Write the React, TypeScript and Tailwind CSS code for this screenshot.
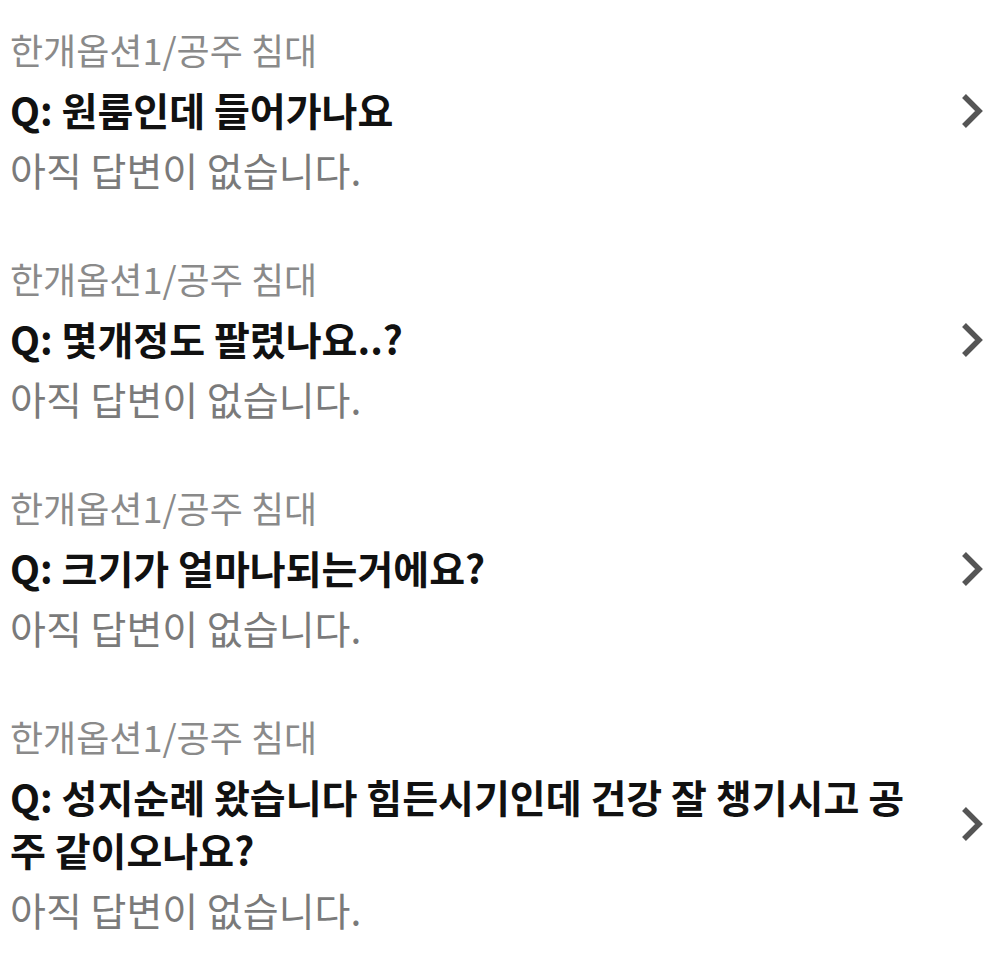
import React from "react";

const items = [
  { q: "원룸인데 들어가나요" },
  { q: "몇개정도 팔렸나요..?" },
  { q: "크기가 얼마나되는거에요?" },
  { q: "성지순례 왔습니다 힘든시기인데 건강 잘 챙기시고 공주 같이오나요?" },
];

function Chevron() {
  return (
    <svg width="30" height="40" viewBox="0 0 30 40" fill="none">
      <path d="M6 5 L21 20 L6 35" stroke="#555555" strokeWidth="5.5" strokeLinecap="butt" strokeLinejoin="miter" />
    </svg>
  );
}

export default function App() {
  return (
    <div
      className="w-[999px] h-[968px] bg-white pt-[25px]"
      style={{ fontFamily: '"Noto Sans CJK KR", "Noto Sans", sans-serif' }}
    >
      {items.map((it, i) => (
        <div key={i} className="flex items-center pl-[10px] mb-[58px]">
          <div className="w-[925px] flex flex-col">
            <div className="text-[36px] leading-[48px] text-[#8a8a8a]">한개옵션1/공주 침대</div>
            <div className="mt-[10px] text-[39px] leading-[53px] font-bold text-[#111111]">
              Q: {it.q}
            </div>
            <div className="mt-[6px] text-[39px] leading-[54px] text-[#7a7a7a]">아직 답변이 없습니다.</div>
          </div>
          <div className="flex-1 flex justify-end pr-[11px]">
            <Chevron />
          </div>
        </div>
      ))}
    </div>
  );
}
